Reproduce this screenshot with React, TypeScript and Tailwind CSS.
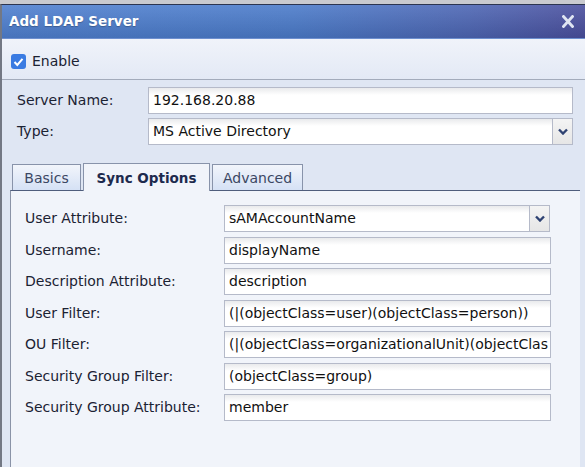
import React from "react";

function Chevron() {
  return (
    <svg width="10" height="7" viewBox="0 0 10 7">
      <polyline points="1,1.5 5,5.5 9,1.5" fill="none" stroke="#2e4272" strokeWidth="2.4" />
    </svg>
  );
}

function TextBox({ value, w }: { value: string; w: string }) {
  return (
    <div
      className={`${w} h-[27px] shrink-0 flex items-center pl-[4px] border border-[#b5bac9] bg-[linear-gradient(to_bottom,#e9eaec,#ffffff_7px)] text-[#111] whitespace-nowrap overflow-hidden`}
    >
      {value}
    </div>
  );
}

function SelectBox({ value, w }: { value: string; w: string }) {
  return (
    <div className={`${w} h-[27px] shrink-0 flex`}>
      <div className="flex-1 flex items-center pl-[4px] border border-[#b5bac9] bg-[linear-gradient(to_bottom,#e9eaec,#ffffff_7px)] text-[#111] whitespace-nowrap overflow-hidden">
        {value}
      </div>
      <div className="w-[20px] flex items-center justify-center border border-l-0 border-[#b5bac9] bg-[linear-gradient(to_bottom,#f4f4f4,#e6e6e6)]">
        <Chevron />
      </div>
    </div>
  );
}

const rows: { label: string; value: string; select?: boolean }[] = [
  { label: "User Attribute:", value: "sAMAccountName", select: true },
  { label: "Username:", value: "displayName" },
  { label: "Description Attribute:", value: "description" },
  { label: "User Filter:", value: "(|(objectClass=user)(objectClass=person))" },
  { label: "OU Filter:", value: "(|(objectClass=organizationalUnit)(objectClas" },
  { label: "Security Group Filter:", value: "(objectClass=group)" },
  { label: "Security Group Attribute:", value: "member" },
];

export default function App() {
  return (
    <div className="w-[585px] h-[467px] overflow-hidden bg-[#c9cacf] pt-[4px] font-['DejaVu_Sans',sans-serif] text-[14px] text-[#1b2233]">
      <div className="h-full flex flex-col border-l-2 border-t border-l-[#737884] border-t-[#2c3550]">
        {/* Title bar */}
        <div className="h-[34px] shrink-0 flex items-center justify-between pl-[7px] pr-[11px] border-b border-b-[#6d8fcf] bg-[linear-gradient(to_bottom,rgba(255,255,255,0.10),rgba(0,0,0,0.10)),linear-gradient(to_right,#4f80d0,#4b7bca_50%,#4d66b4_80%,#4a4f9e)]">
          <span className="text-white font-bold text-[13.5px] [text-shadow:0_1px_1px_rgba(0,0,0,0.25)]">
            Add LDAP Server
          </span>
          <svg width="12" height="13" viewBox="0 0 12 13">
            <path d="M1.5 1.5 L10.5 11.5 M10.5 1.5 L1.5 11.5" stroke="#dfe5f2" strokeWidth="2.8" strokeLinecap="square" />
          </svg>
        </div>

        {/* Enable */}
        <div className="h-[41px] shrink-0 flex items-start pt-[15px] pl-[9px] border-b border-b-[#a3abbb] bg-[linear-gradient(to_bottom,#f0f3fa,#e3e9f5)]">
          <div className="w-[15px] h-[15px] rounded-[3px] bg-[#3a7be2] flex items-center justify-center">
            <svg width="11" height="10" viewBox="0 0 11 10">
              <polyline points="1.5,5 4.3,8 9.5,1.8" fill="none" stroke="#fff" strokeWidth="2" />
            </svg>
          </div>
          <span className="ml-[6px] leading-[15px]">Enable</span>
        </div>

        {/* Body */}
        <div className="flex-1 flex flex-col bg-[#dfe6f3]">
          <div className="flex flex-col gap-[4px] pt-[7px] pl-[15px]">
            <div className="flex items-center">
              <span className="w-[131px]">Server Name:</span>
              <TextBox value="192.168.20.88" w="w-[425px]" />
            </div>
            <div className="flex items-center">
              <span className="w-[131px]">Type:</span>
              <SelectBox value="MS Active Directory" w="w-[425px]" />
            </div>
          </div>

          {/* Tabs */}
          <div className="mt-[18px] flex items-end pl-[10px] h-[27px] relative z-10">
            <div className="w-[69px] h-[26px] flex items-center justify-center pt-[2px] border border-b-0 border-[#8893aa] bg-[linear-gradient(to_bottom,#f2f5fb,#d5e1f5)] text-[#3b4763]">
              Basics
            </div>
            <div className="ml-[2px] w-[127px] h-[28px] mb-[-1px] flex items-center justify-center pt-[2px] border border-b-0 border-[#8893aa] bg-[#f1f4fa] font-bold text-[13.5px] text-[#1d2a4d]">
              Sync Options
            </div>
            <div className="ml-[2px] w-[91px] h-[26px] flex items-center justify-center pt-[2px] border border-b-0 border-[#8893aa] bg-[linear-gradient(to_bottom,#f2f5fb,#d5e1f5)] text-[#3b4763]">
              Advanced
            </div>
          </div>

          {/* Panel */}
          <div className="flex-1 ml-[8px] w-[570px] border-t border-l border-t-[#4f5d7c] border-l-[#8a93a7] bg-[#f1f4fa] pt-[14px] pl-[14px]">
            <div className="flex flex-col gap-[4.5px]">
              {rows.map((r) => (
                <div key={r.label} className="flex items-center">
                  <span className="w-[199px] shrink-0">{r.label}</span>
                  {r.select ? (
                    <SelectBox value={r.value} w="w-[326px]" />
                  ) : (
                    <TextBox value={r.value} w="w-[327px]" />
                  )}
                </div>
              ))}
            </div>
          </div>
        </div>
      </div>
    </div>
  );
}
